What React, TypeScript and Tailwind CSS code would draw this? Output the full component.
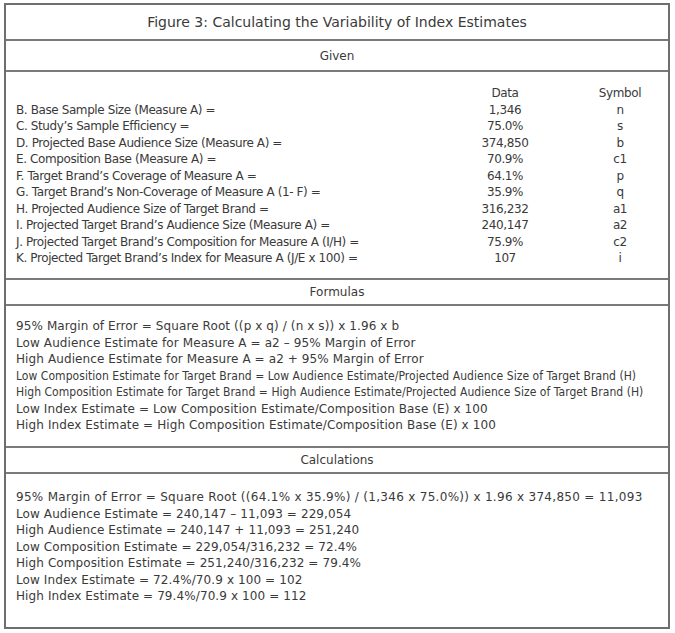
const given: [string, string, string][] = [
  ["B. Base Sample Size (Measure A) =", "1,346", "n"],
  ["C. Study’s Sample Efficiency =", "75.0%", "s"],
  ["D. Projected Base Audience Size (Measure A) =", "374,850", "b"],
  ["E. Composition Base (Measure A) =", "70.9%", "c1"],
  ["F. Target Brand’s Coverage of Measure A =", "64.1%", "p"],
  ["G. Target Brand’s Non-Coverage of Measure A (1- F) =", "35.9%", "q"],
  ["H. Projected Audience Size of Target Brand =", "316,232", "a1"],
  ["I. Projected Target Brand’s Audience Size (Measure A) =", "240,147", "a2"],
  ["J. Projected Target Brand’s Composition for Measure A (I/H) =", "75.9%", "c2"],
  ["K. Projected Target Brand’s Index for Measure A (J/E x 100) =", "107", "i"],
];

// second value: squeeze the line (the source set these narrower)
const formulas: [string, boolean][] = [
  ["95% Margin of Error = Square Root ((p x q) / (n x s)) x 1.96 x b", false],
  ["Low Audience Estimate for Measure A = a2 – 95% Margin of Error", false],
  ["High Audience Estimate for Measure A = a2 + 95% Margin of Error", false],
  ["Low Composition Estimate for Target Brand = Low Audience Estimate/Projected Audience Size of Target Brand (H)", true],
  ["High Composition Estimate for Target Brand = High Audience Estimate/Projected Audience Size of Target Brand (H)", true],
  ["Low Index Estimate = Low Composition Estimate/Composition Base (E) x 100", false],
  ["High Index Estimate = High Composition Estimate/Composition Base (E) x 100", false],
];

const calculations = [
  "95% Margin of Error = Square Root ((64.1% x 35.9%) / (1,346 x 75.0%)) x 1.96 x 374,850 = 11,093",
  "Low Audience Estimate = 240,147 – 11,093 = 229,054",
  "High Audience Estimate = 240,147 + 11,093 = 251,240",
  "Low Composition Estimate = 229,054/316,232 = 72.4%",
  "High Composition Estimate = 251,240/316,232 = 79.4%",
  "Low Index Estimate = 72.4%/70.9 x 100 = 102",
  "High Index Estimate = 79.4%/70.9 x 100 = 112",
];

function SectionHeader({ title, h }: { title: string; h: string }) {
  return (
    <div className={`${h} flex items-center justify-center border-b-2 border-[#7a7a7a]`}>
      {title}
    </div>
  );
}

export default function App() {
  return (
    <div className="w-[675px] h-[633px] bg-white pt-[3px] pl-[4px] font-['DejaVu_Sans',sans-serif] text-[12px] text-[#3a3a3a]">
      <div className="w-[666px] h-[626px] border-2 border-[#6e6e6e] flex flex-col">
        <div className="h-[36px] flex items-center justify-center border-b-2 border-[#7a7a7a] text-[14px]">
          Figure 3: Calculating the Variability of Index Estimates
        </div>

        <SectionHeader title="Given" h="h-[31px]" />
        <div className="h-[208px] border-b-2 border-[#7a7a7a] pt-[13px] pl-[10px] pr-[8px] leading-[16.5px] tracking-[-0.4px]">
          <div className="grid grid-cols-[1fr_150px_80px]">
            <div />
            <div className="text-center">Data</div>
            <div className="text-center">Symbol</div>
          </div>
          {given.map(([label, data, sym]) => (
            <div key={label} className="grid grid-cols-[1fr_150px_80px]">
              <div className="whitespace-nowrap">{label}</div>
              <div className="text-center">{data}</div>
              <div className="text-center">{sym}</div>
            </div>
          ))}
        </div>

        <SectionHeader title="Formulas" h="h-[26px]" />
        <div className="h-[142px] border-b-2 border-[#7a7a7a] pt-[12px] pl-[10px] leading-[16.5px]">
          {formulas.map(([line, tight]) => (
            <div
              key={line}
              className={
                tight
                  ? "whitespace-nowrap font-['DejaVu_Sans_Condensed','DejaVu_Sans',sans-serif] tracking-[0.05px]"
                  : "whitespace-nowrap tracking-[0.1px]"
              }
            >
              {line}
            </div>
          ))}
        </div>

        <SectionHeader title="Calculations" h="h-[26px]" />
        <div className="flex-1 pt-[15px] pl-[10px] leading-[16.5px] tracking-[0.1px]">
          {calculations.map((line, i) => (
            <div key={line} className={i === 0 ? "whitespace-nowrap tracking-[0.3px]" : "whitespace-nowrap"}>
              {line}
            </div>
          ))}
        </div>
      </div>
    </div>
  );
}
